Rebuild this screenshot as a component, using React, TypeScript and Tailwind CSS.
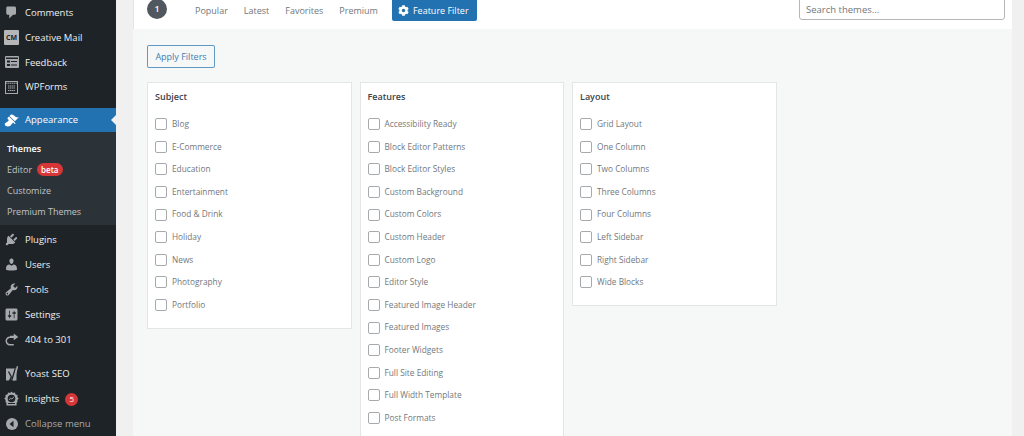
import type { ReactNode } from "react";
import { FaCog } from "react-icons/fa";

const font = "font-['Open_Sans','Noto_Sans',sans-serif]";

const subjects = ["Blog", "E-Commerce", "Education", "Entertainment", "Food & Drink", "Holiday", "News", "Photography", "Portfolio"];
const features = [
  "Accessibility Ready",
  "Block Editor Patterns",
  "Block Editor Styles",
  "Custom Background",
  "Custom Colors",
  "Custom Header",
  "Custom Logo",
  "Editor Style",
  "Featured Image Header",
  "Featured Images",
  "Footer Widgets",
  "Full Site Editing",
  "Full Width Template",
  "Post Formats",
];
const layouts = ["Grid Layout", "One Column", "Two Columns", "Three Columns", "Four Columns", "Left Sidebar", "Right Sidebar", "Wide Blocks"];

// dashicons, the wp-admin menu icon set
const paths = {
  comments: "M5 2h9c1.1 0 2 .9 2 2v7c0 1.1-.9 2-2 2h-2l-5 5v-5H5c-1.1 0-2-.9-2-2V4c0-1.1.9-2 2-2z",
  appearance:
    "M14.48 11.06L7.41 3.99l1.5-1.5c.5-.56 2.3-.47 3.51.32 1.21.8 1.43 1.28 2.91 2.1 1.18.64 2.45 1.26 4.45.85zm-.71.71L6.7 4.7 4.93 6.47c-.39.39-.39 1.02 0 1.41l1.06 1.06c.39.39.39 1.03 0 1.42-.6.6-1.43 1.11-2.21 1.69-.35.26-.7.53-1.01.84C1.43 13.23 1 14.07 1 15c0 2 2.5 3 4 3s3-.5 4-1.5c.31-.31.58-.66.84-1.01.58-.78 1.09-1.61 1.69-2.21.39-.39 1.03-.39 1.42 0l1.06 1.06c.39.39 1.02.39 1.41 0z",
  plugins:
    "M13.11 4.36L9.87 7.6 8 5.73l3.24-3.24c.35-.34 1.05-.2 1.56.32.52.51.66 1.21.31 1.55zm-8 1.77l.91-1.12 9.01 9.01-1.19.84c-.71.71-2.63 1.16-3.82 1.16H6.14L4.9 17.26c-.59.59-1.54.59-2.12 0-.59-.58-.59-1.53 0-2.12l1.24-1.24v-3.88c0-1.13.4-3.19 1.09-3.89zm7.26 3.97l3.24-3.24c.34-.35 1.04-.21 1.55.31.52.51.66 1.21.31 1.55l-3.24 3.25z",
  users:
    "M10 9.25c-2.27 0-2.73-3.44-2.73-3.44C7 4.02 7.82 2 9.97 2c2.16 0 2.98 2.02 2.71 3.81 0 0-.41 3.44-2.68 3.44zm0 2.57L12.72 10c2.39 0 4.52 2.33 4.52 4.53v2.49s-3.65 1.13-7.24 1.13c-3.65 0-7.24-1.13-7.24-1.13v-2.49c0-2.25 1.94-4.48 4.47-4.48z",
  tools:
    "M16.68 9.77c-1.34 1.34-3.3 1.67-4.95.99l-5.41 6.52c-.99.99-2.59.99-3.58 0s-.99-2.59 0-3.57l6.52-5.42c-.68-1.65-.35-3.61.99-4.95 1.28-1.28 3.12-1.62 4.72-1.06l-2.89 2.89 2.82 2.82 2.86-2.87c.53 1.58.18 3.39-1.08 4.65zM3.81 16.21c.4.39 1.04.39 1.43 0 .4-.4.4-1.04 0-1.43-.39-.4-1.03-.4-1.43 0-.39.39-.39 1.03 0 1.43z",
  settings:
    "M18 16V4c0-1.1-.9-2-2-2H4c-1.1 0-2 .9-2 2v12c0 1.1.9 2 2 2h12c1.1 0 2-.9 2-2zM8 11h1c.55 0 1 .45 1 1s-.45 1-1 1H8v1.5c0 .28-.22.5-.5.5s-.5-.22-.5-.5V13H6c-.55 0-1-.45-1-1s.45-1 1-1h1V5.5c0-.28.22-.5.5-.5s.5.22.5.5V11zm5-2h-1c-.55 0-1-.45-1-1s.45-1 1-1h1V5.5c0-.28.22-.5.5-.5s.5.22.5.5V7h1c.55 0 1 .45 1 1s-.45 1-1 1h-1v5.5c0 .28-.22.5-.5.5s-.5-.22-.5-.5V9z",
  redo: "M8 5h5V2l6 4.5-6 4.5V8H8c-2.2 0-4 1.8-4 4s1.8 4 4 4h5v2H8c-3.3 0-6-2.7-6-6s2.7-6 6-6z",
};

function Dashicon({ name }: { name: keyof typeof paths }) {
  return (
    <svg viewBox="0 0 20 20" className="h-[15px] w-[15px]" fill="currentColor">
      <path d={paths[name]} />
    </svg>
  );
}

function CreativeMailIcon() {
  return (
    <div className="flex h-[15px] w-[15px] items-center justify-center rounded-[1px] bg-[#b4b6b8] text-[7px] font-bold leading-none text-[#1d2327]">
      CM
    </div>
  );
}

function FeedbackIcon() {
  return (
    <svg viewBox="0 0 14 12" className="h-[12px] w-[14px]">
      <rect width="14" height="12" rx="1" fill="#a7aaad" />
      <rect x="1" y="1.5" width="12" height="1.5" fill="#1d2327" />
      <rect x="2" y="4.5" width="3" height="2" fill="#1d2327" />
      <rect x="6" y="5" width="6" height="1" fill="#1d2327" />
      <rect x="2" y="8" width="3" height="2" fill="#1d2327" />
      <rect x="6" y="8.5" width="6" height="1" fill="#1d2327" />
    </svg>
  );
}

function WpFormsIcon() {
  return (
    <svg viewBox="0 0 13 13" className="h-[13px] w-[13px]" fill="none" stroke="#a7aaad">
      <rect x="0.5" y="0.5" width="12" height="12" />
      <path d="M0.5 2.2h12M3 5h7M3 7h7M3 9.5h7" strokeDasharray="1.5 0.5" />
    </svg>
  );
}

function YoastIcon() {
  return (
    <svg viewBox="0 0 14 15" className="h-[15px] w-[14px]">
      <path d="M1 2.5h10.5v12H1z" fill="#a7aaad" />
      <path d="M3.5 5.5l2.8 5.2-1.6 3.8h2l3.6-12" fill="none" stroke="#1d2327" strokeWidth="1.3" />
      <path d="M11.8 0l1.4 0.4-3.7 14h-1.4z" fill="#a7aaad" />
    </svg>
  );
}

function InsightsIcon() {
  return (
    <svg viewBox="0 0 15 15" className="h-[15px] w-[15px]">
      <path
        d="M7.5 0.5l1.4 1.6 2-0.7 0.7 2 2 0.5-0.3 2.1 1.4 1.5-1.4 1.5 0.3 2.1-1 0.5v2.9H2.4v-2.9l-1-0.5 0.3-2.1L0.3 7.5l1.4-1.5-0.3-2.1 2-0.5 0.7-2 2 0.7z"
        fill="#a7aaad"
      />
      <circle cx="7.5" cy="7.5" r="3.8" fill="#1d2327" />
      <path d="M5 9l1.7-2 1.2 1.2L10 5.6" fill="none" stroke="#a7aaad" strokeWidth="0.9" />
      <rect x="4" y="12" width="7" height="1" fill="#1d2327" />
    </svg>
  );
}

function CollapseIcon() {
  return (
    <svg viewBox="0 0 12 12" className="h-[12px] w-[12px]">
      <circle cx="6" cy="6" r="6" fill="#a7aaad" />
      <path d="M7.5 2.8v6.4L3.5 6z" fill="#1d2327" />
    </svg>
  );
}

function MenuItem({ icon, children, dim }: { icon: ReactNode; children: ReactNode; dim?: boolean }) {
  return (
    <div className={`flex h-[25px] items-center text-[9.5px] ${dim ? "text-[#a7aaad]" : "text-[#f0f0f1]"}`}>
      <div className="mr-[2px] flex w-[23px] shrink-0 items-center justify-center text-[#a7aaad]">{icon}</div>
      <div className="flex items-center pt-[1px]">{children}</div>
    </div>
  );
}

function Sidebar() {
  return (
    <aside className="flex h-[436px] w-[116px] shrink-0 flex-col overflow-hidden bg-[#1d2327]">
      <MenuItem icon={<Dashicon name="comments" />}>Comments</MenuItem>
      <MenuItem icon={<CreativeMailIcon />}>Creative Mail</MenuItem>
      <MenuItem icon={<FeedbackIcon />}>Feedback</MenuItem>
      <MenuItem icon={<WpFormsIcon />}>WPForms</MenuItem>

      <div className="relative mt-[8px] flex h-[25px] items-center bg-[#2271b1] text-[9.5px] text-white">
        <div className="mr-[2px] flex w-[23px] shrink-0 items-center justify-center">
          <Dashicon name="appearance" />
        </div>
        <span className="pt-[1px]">Appearance</span>
        <div className="absolute right-0 top-[7px] h-0 w-0 border-y-[5px] border-r-[5px] border-y-transparent border-r-[#f0f0f1]" />
      </div>

      <div className="flex h-[93px] flex-col justify-center bg-[#2c3338] pl-[7px] pt-[3px] text-[9px] text-[#c3c4c7]">
        <div className="flex h-[21px] items-center font-semibold text-white">Themes</div>
        <div className="flex h-[21px] items-center gap-[5px]">
          Editor
          <span className="rounded-full bg-[#d63638] px-[4px] text-[8px] font-semibold leading-[13px] text-white">beta</span>
        </div>
        <div className="flex h-[21px] items-center">Customize</div>
        <div className="flex h-[21px] items-center">Premium Themes</div>
      </div>

      <div className="mt-[2px]">
        <MenuItem icon={<Dashicon name="plugins" />}>Plugins</MenuItem>
        <MenuItem icon={<Dashicon name="users" />}>Users</MenuItem>
        <MenuItem icon={<Dashicon name="tools" />}>Tools</MenuItem>
        <MenuItem icon={<Dashicon name="settings" />}>Settings</MenuItem>
        <MenuItem icon={<Dashicon name="redo" />}>404 to 301</MenuItem>
      </div>

      <div className="mt-[9px]">
        <MenuItem icon={<YoastIcon />}>Yoast SEO</MenuItem>
        <MenuItem icon={<InsightsIcon />}>
          Insights
          <span className="ml-[6px] flex h-[13px] w-[13px] items-center justify-center rounded-full bg-[#d63638] text-[8px] text-white">5</span>
        </MenuItem>
        <MenuItem icon={<CollapseIcon />} dim>
          Collapse menu
        </MenuItem>
      </div>
    </aside>
  );
}

function FilterCard({ title, items, className }: { title: string; items: string[]; className: string }) {
  return (
    <section className={`w-[204.5px] shrink-0 border border-[#e4e5e7] bg-white pl-[7px] ${className}`}>
      <h4 className="mt-[5px] flex h-[17px] items-center text-[9px] font-semibold leading-none text-[#3c434a]">{title}</h4>
      <ul className="mt-[8px] flex flex-col">
        {items.map((item) => (
          <li key={item} className="flex h-[22.6px] items-center gap-[5px] text-[8.3px] text-[#72777c]">
            <span className="h-[12px] w-[12px] shrink-0 rounded-[2px] border border-[#a7aaad] bg-white" />
            {item}
          </li>
        ))}
      </ul>
    </section>
  );
}

function Tabs() {
  return (
    <div className="flex h-[29px] shrink-0 items-start overflow-hidden border-l border-[#e4e5e7] bg-white pl-[13px]">
      <div className="-mt-[1px] flex h-[20px] w-[20px] items-center justify-center rounded-full bg-[#50575e] text-[9px] font-semibold text-white">1</div>
      <nav className="ml-[28px] flex h-[20px] items-center gap-[16px] pt-[1px] text-[9px] text-[#72777c]">
        <span>Popular</span>
        <span>Latest</span>
        <span>Favorites</span>
        <span>Premium</span>
      </nav>
      <div className="ml-[14px] flex h-[21px] items-center gap-[4px] whitespace-nowrap rounded-b-[2px] bg-[#2271b1] pl-[6px] pr-[8px] text-[9px] text-white">
        <FaCog className="h-[11px] w-[11px] shrink-0" />
        Feature Filter
      </div>
      <div className="-mt-[4px] ml-auto mr-[7px] flex h-[24px] w-[206px] items-center rounded-[3px] border border-[#b4b6b8] bg-white pl-[6px] pt-[4px] text-[9.5px] text-[#72777c]">
        Search themes...
      </div>
    </div>
  );
}

export default function App() {
  return (
    <div className={`flex h-[436px] w-[1024px] overflow-hidden bg-[#f0f0f1] ${font}`}>
      <Sidebar />
      <main className="ml-[17px] mr-[12px] flex min-w-0 flex-1 flex-col bg-[#f6f7f7]">
        <Tabs />
        <div className="pl-[14px] pt-[16px]">
          <button className="flex h-[23px] w-[68px] items-center justify-center rounded-[2px] border border-[#2271b1]/70 bg-[#f6f7f7] text-[9px] text-[#3d7fb5]">
            Apply Filters
          </button>
          <div className="mt-[14px] flex items-start gap-[8px]">
            <FilterCard title="Subject" items={subjects} className="h-[247px]" />
            <FilterCard title="Features" items={features} className="h-[400px]" />
            <FilterCard title="Layout" items={layouts} className="h-[224px]" />
          </div>
        </div>
      </main>
    </div>
  );
}
